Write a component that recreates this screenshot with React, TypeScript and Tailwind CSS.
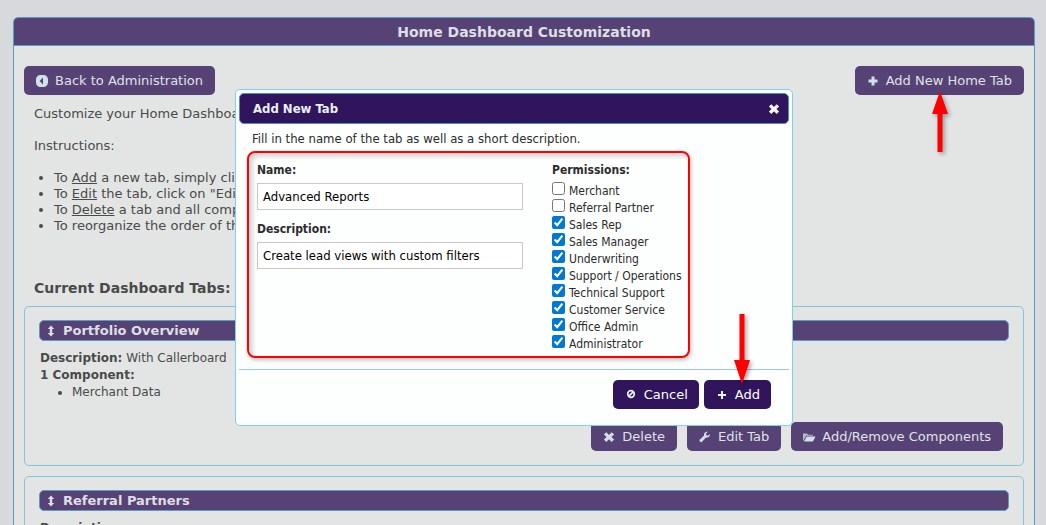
import { useState } from 'react';
import type { ReactNode } from 'react';

const ROLES = [
  'Merchant',
  'Referral Partner',
  'Sales Rep',
  'Sales Manager',
  'Underwriting',
  'Support / Operations',
  'Technical Support',
  'Customer Service',
  'Office Admin',
  'Administrator',
];

const ICONS: Record<string, ReactNode> = {
  back: (
    <path fillRule="evenodd" d="M6.500 2h3A4.500 4.500 0 0 1 14 6.500v3A4.500 4.500 0 0 1 9.500 14h-3A4.500 4.500 0 0 1 2 9.500v-3A4.500 4.500 0 0 1 6.500 2zM9 4.600v6.800L5.600 8z" />
  ),
  plus: <path d="M6.500 3.500h3v3h3v3h-3v3h-3v-3h-3v-3h3z" />,
  plusThin: <path d="M7 4h2v3h3v2H9v3H7V9H4V7h3z" />,
  ban: (
    <g fill="none" stroke="currentColor" strokeWidth="1.7">
      <circle cx="8" cy="7" r="3.3" />
      <path d="M5.8 9.2l4.4-4.4" />
    </g>
  ),
  cross: <path d="M5.3 3.2L8 5.9l2.7-2.7 2.4 2.3L10.4 8l2.7 2.6-2.4 2.3L8 10.2l-2.7 2.7-2.4-2.3L5.6 8 2.9 5.5z" />,
  wrench: (
    <path d="M12.900 5.100l-1.800 1.600-1.700-.5-.4-1.700 1.900-1.700C9.200 2.300 7.200 3.300 7 5.500l.1 1-4.200 4.100c-.8.900-.4 2.200.6 2.500.6.200 1.100 0 1.500-.4l4-4.100c2 .4 4.300-.9 3.900-3.500z" />
  ),
  folder: (
    <>
      <path opacity=".75" d="M2 11.500V4.500h4l1 1.200h4.800v1H5.200L2.600 11.500z" />
      <path d="M5.700 7.400H14.500L12 12.500H3z" />
    </>
  ),
  sort: <path d="M8 2.500l3.200 3.500H9.200v4h2L8 13.500 4.800 10h2V6h-2z" />,
};

function Icon({ name }: { name: string }) {
  return (
    <svg viewBox="0 0 16 16" className="size-4 shrink-0" fill="currentColor" aria-hidden="true">
      {ICONS[name]}
    </svg>
  );
}

interface ButtonProps {
  icon: string;
  onClick?: () => void;
  children: ReactNode;
}

function PageButton({ icon, onClick, children }: ButtonProps) {
  return (
    <button type="button" onClick={onClick} className="flex h-[29px] items-center gap-[5px] rounded-[5px] bg-[#574275] pr-3 pl-[10px] text-[#dfe2e6]">
      <span className="text-[#d0e2e8]"><Icon name={icon} /></span>
      {children}
    </button>
  );
}

function DialogButton({ icon, onClick, children }: ButtonProps) {
  return (
    <button type="button" onClick={onClick} className="flex h-[29px] items-center gap-[5px] rounded-[5px] bg-[#30145c] pr-[11px] pl-[10px] text-white">
      <span className="text-[#e0f4fb]"><Icon name={icon} /></span>
      {children}
    </button>
  );
}

// Red callout arrow, drawn pointing up or down
function Arrow({ down = false, className }: { down?: boolean; className: string }) {
  return (
    <svg
      width="24"
      height="72"
      viewBox="0 0 24 72"
      className={`pointer-events-none absolute drop-shadow-[2px_2px_2px_rgba(0,0,0,0.35)] ${className}`}
      fill="#fe0000"
      aria-hidden="true"
    >
      {down ? <path d="M12 71l8-24h-5.500V1h-5v46H4z" /> : <path d="M12 1l8 23h-5.500v38h-5V24H4z" />}
    </svg>
  );
}

function TabCard({ title, description, components }: { title: string; description: string; components: string[] }) {
  return (
    <section className="min-h-40 rounded-[5px] border border-[#84c5de] px-[14px] pt-[13px] pb-[14px]">
      <h3 className="flex h-[21px] items-center gap-1 rounded-[5px] border border-[#5b9bc7] bg-[#574275] pl-[3px] text-[13px] font-bold text-[#dcdfe3]">
        <Icon name="sort" />
        {title}
      </h3>
      <div className="pt-[9px] pl-px text-xs leading-[17px]">
        <p><strong>Description:</strong> {description}</p>
        <p className="font-bold">{components.length} Component:</p>
        <ul className="list-disc pl-8">
          {components.map(c => <li key={c}>{c}</li>)}
        </ul>
      </div>
      <div className="flex justify-end gap-[10px] pt-[21px] pr-[6px]">
        <PageButton icon="cross">Delete</PageButton>
        <PageButton icon="wrench">Edit Tab</PageButton>
        <PageButton icon="folder">Add/Remove Components</PageButton>
      </div>
    </section>
  );
}

function AddTabDialog({ onClose }: { onClose: () => void }) {
  const [name, setName] = useState('Advanced Reports');
  const [description, setDescription] = useState('Create lead views with custom filters');
  const [allowed, setAllowed] = useState<string[]>(ROLES.slice(2));

  const toggle = (role: string) =>
    setAllowed(prev => (prev.includes(role) ? prev.filter(r => r !== role) : [...prev, role]));

  return (
    <div className="fixed inset-0 flex items-start justify-center pt-[89px] pr-[18px]">
      <div
        role="dialog"
        aria-labelledby="dialog-title"
        className="w-full max-w-[558px] rounded-[5px] border border-[#7dd0f0] bg-[#fdfefe] p-[3px] font-['DejaVu_Sans_Condensed','Noto_Sans',sans-serif] text-xs text-[#2c2c2c]"
      >
        <div className="flex h-[31px] items-center justify-between rounded-[5px] border border-[#4590cc] bg-[#30145c] pr-[6px] pl-[13px]">
          <h2 id="dialog-title" className="text-[13px] font-bold text-[#e8f2f8]">Add New Tab</h2>
          <button type="button" aria-label="Close" onClick={onClose} className="text-white">
            <Icon name="cross" />
          </button>
        </div>

        <p className="pt-[6px] pl-[13px] text-[13px] leading-[18px]">Fill in the name of the tab as well as a short description.</p>

        {/* Highlighted form area */}
        <div className="mt-[3px] mr-[99px] ml-2 flex justify-between gap-4 rounded-lg border-2 border-[#fe0000] pt-[9px] pr-[6px] pb-1 pl-2 shadow-[1px_2px_4px_rgba(0,0,0,0.25),inset_3px_3px_5px_rgba(0,0,0,0.2)]">
          <div className="w-[266px]">
            <label htmlFor="tab-name" className="block leading-[17px] font-bold">Name:</label>
            <input
              id="tab-name"
              value={name}
              onChange={e => setName(e.target.value)}
              className="mt-1 h-[27px] w-full border border-[#c8c8c8] bg-white px-[5px] text-[13px] text-black"
            />
            <label htmlFor="tab-description" className="mt-[11px] block leading-[17px] font-bold">Description:</label>
            <input
              id="tab-description"
              value={description}
              onChange={e => setDescription(e.target.value)}
              className="mt-1 h-[27px] w-full border border-[#c8c8c8] bg-white px-[5px] text-[13px] text-black"
            />
          </div>
          <fieldset className="w-[130px]">
            <legend className="leading-[17px] font-bold">Permissions:</legend>
            <div className="pt-[3px]">
              {ROLES.map(role => (
                <label key={role} className="flex h-[17px] items-start gap-1 leading-[19px] whitespace-nowrap">
                  <input
                    type="checkbox"
                    checked={allowed.includes(role)}
                    onChange={() => toggle(role)}
                    className="size-[13px] accent-[#0078d4]"
                  />
                  {role}
                </label>
              ))}
            </div>
          </fieldset>
        </div>

        <div className="mt-[11px] flex justify-end gap-[5px] border-t border-[#a3c3de] pt-[10px] pr-[18px] pb-[13px] font-['DejaVu_Sans',sans-serif] text-[13px]">
          <DialogButton icon="ban" onClick={onClose}>Cancel</DialogButton>
          <div className="relative">
            <DialogButton icon="plusThin">Add</DialogButton>
            <Arrow down className="bottom-6 left-[26px]" />
          </div>
        </div>
      </div>
    </div>
  );
}

export default function App() {
  const [open, setOpen] = useState(true);

  return (
    <div className="h-screen overflow-hidden bg-[#d8d9dd] pt-[17px] pr-[11px] pl-[13px] font-['DejaVu_Sans',sans-serif] text-[13px] leading-4 text-[#4a4a4a]">
      <main className="rounded-t-[5px] border border-[#5b9bc7] bg-[#e3e5e4]">
        <h1 className="flex h-7 items-center justify-center rounded-t-[4px] border-b border-[#5b9bc7] bg-[#574275] text-sm font-bold text-[#dcdfe3]">
          Home Dashboard Customization
        </h1>
        <div className="px-[10px] pt-5">
          <div className="flex items-start justify-between">
            <PageButton icon="back">Back to Administration</PageButton>
            <div className="relative">
              <PageButton icon="plus" onClick={() => setOpen(true)}>Add New Home Tab</PageButton>
              <Arrow className="top-6 left-[73px]" />
            </div>
          </div>

          <div className="pt-[11px] pl-[10px]">
            <p>Customize your Home Dashboard.</p>
            <p className="pt-4">Instructions:</p>
            <ul className="list-disc pt-4 pl-5">
              <li>To <u>Add</u> a new tab, simply click "Add New Home Tab".</li>
              <li>To <u>Edit</u> the tab, click on "Edit Tab".</li>
              <li>To <u>Delete</u> a tab and all components, click on "Delete".</li>
              <li>To reorganize the order of the tabs, drag and drop them.</li>
            </ul>
            <h2 className="pt-[46px] text-sm leading-4 font-bold">Current Dashboard Tabs:</h2>
          </div>

          <div className="flex flex-col gap-[10px] pt-[10px]">
            <TabCard title="Portfolio Overview" description="With Callerboard" components={['Merchant Data']} />
            <TabCard title="Referral Partners" description="" components={['Merchant Data']} />
          </div>
        </div>
      </main>

      {open && <AddTabDialog onClose={() => setOpen(false)} />}
    </div>
  );
}
